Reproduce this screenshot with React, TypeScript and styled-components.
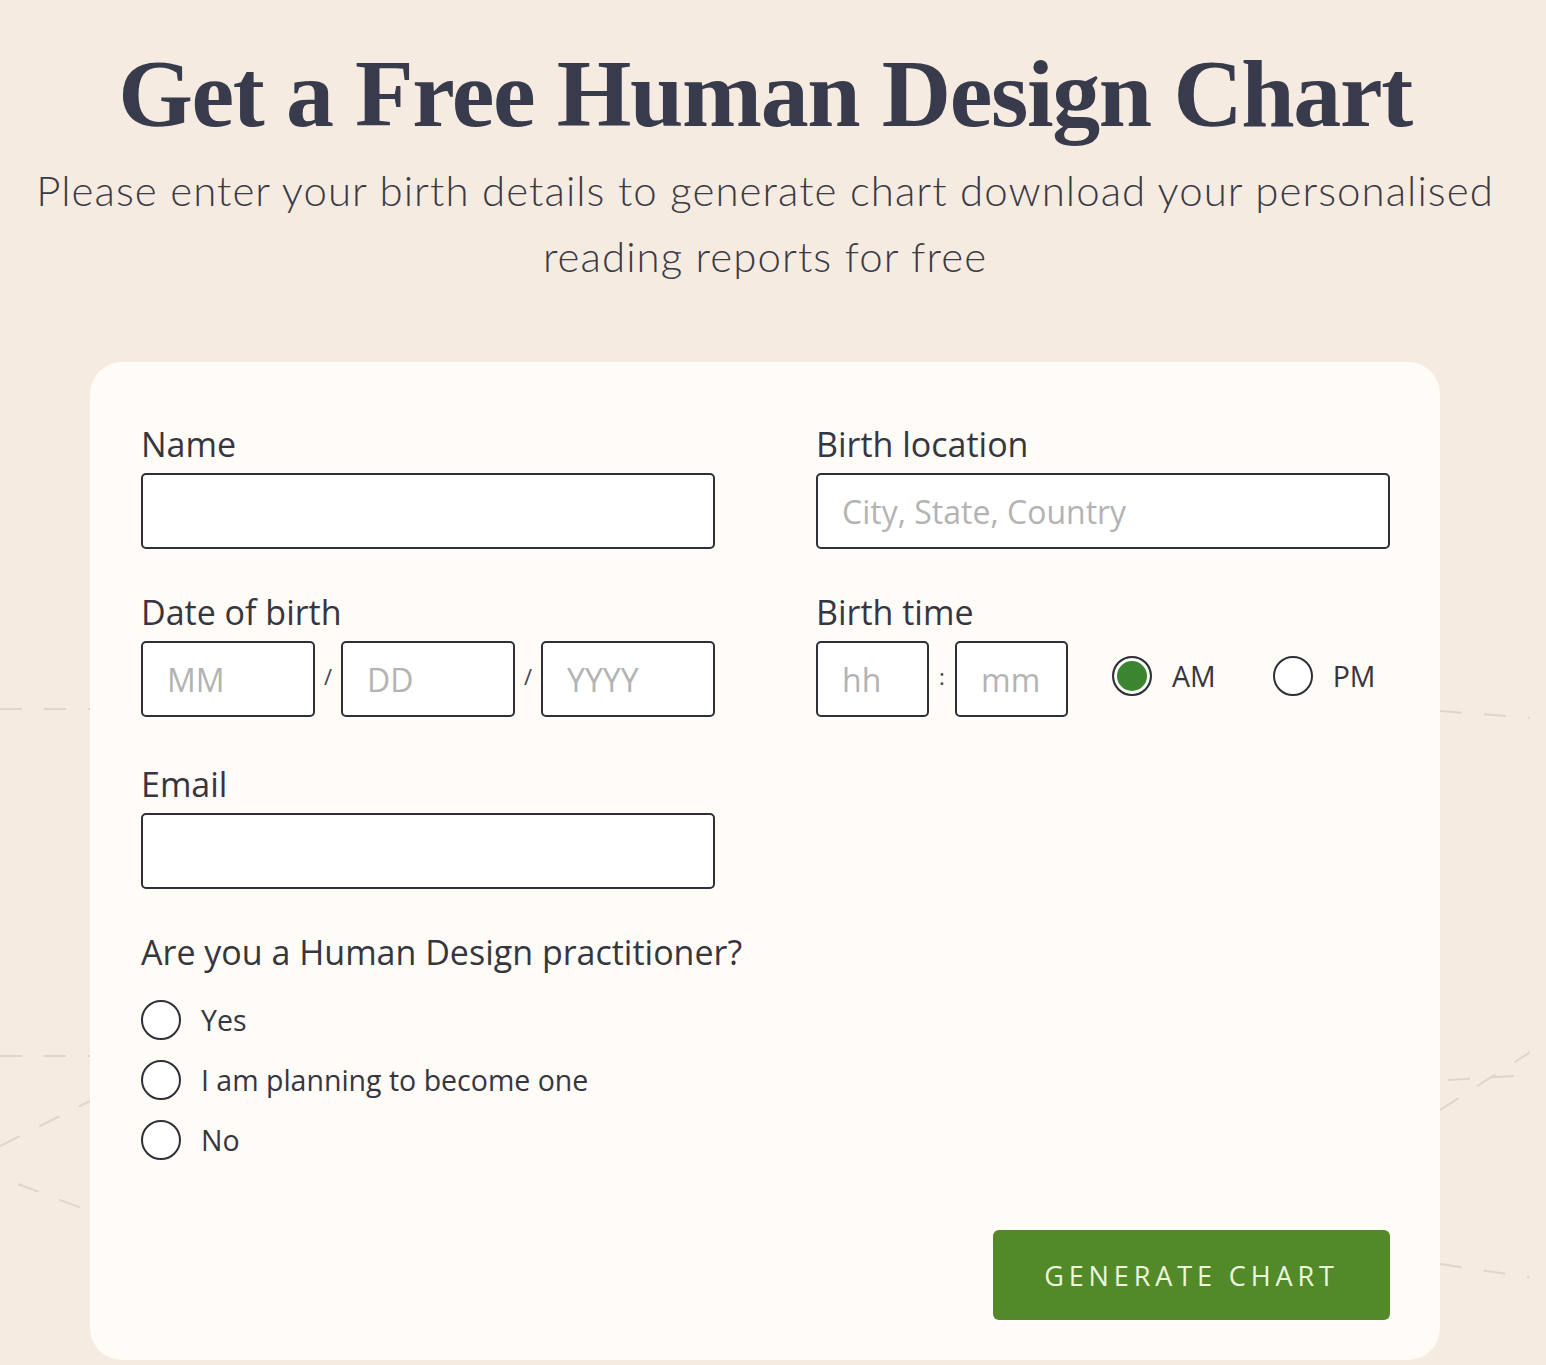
import React from 'react'
import styled, { createGlobalStyle } from 'styled-components'

const GlobalStyle = createGlobalStyle`
    html, body {
        margin: 0;
        padding: 0;
        background: #f6ebe1;
    }
    body {
        font-family: 'Open Sans', 'Liberation Sans', sans-serif;
        color: #35363f;
    }
`

const Page = styled.div`
    position: relative;
    width: 1530px;
    min-height: 1365px;
    overflow: hidden;
    padding-top: 42px;
    box-sizing: border-box;
`

const Backdrop = styled.svg`
    position: absolute;
    left: 0;
    top: 0;
    width: 1546px;
    height: 1365px;
    pointer-events: none;
`

const Header = styled.header`
    position: relative;
    text-align: center;
`

const Title = styled.h1`
    margin: 0;
    font-family: 'Liberation Serif', 'DejaVu Serif', serif;
    font-weight: 700;
    font-size: 96px;
    line-height: 104px;
    color: #383b4b;
    letter-spacing: -1.4px;
`

const Subtitle = styled.p`
    margin: 11px auto 0;
    font-family: Lato, 'Open Sans', sans-serif;
    font-weight: 300;
    font-size: 42px;
    line-height: 66px;
    color: #3a3a45;
    letter-spacing: 1.05px;
`

const Card = styled.form`
    position: relative;
    margin: 73px 0 0 90px;
    width: 1350px;
    box-sizing: border-box;
    padding: 62px 50px 40px 51px;
    background: #fffbf7;
    border-radius: 32px;
    display: grid;
    grid-template-columns: 574px 574px;
    column-gap: 101px;
`

const Column = styled.div`
    display: flex;
    flex-direction: column;
`

const Field = styled.div<{ $gap?: number }>`
    display: flex;
    flex-direction: column;
    margin-bottom: ${p => p.$gap ?? 43}px;
`

const Label = styled.label`
    font-size: 34px;
    line-height: 40px;
    color: #35363f;
    margin-bottom: 9px;
`

const Input = styled.input<{ $w?: number }>`
    box-sizing: border-box;
    width: ${p => (p.$w ? `${p.$w}px` : '100%')};
    height: 76px;
    border: 2px solid #2f3037;
    border-radius: 5px;
    background: #fff;
    padding: 0 24px;
    font-family: 'Open Sans', sans-serif;
    font-size: 32px;
    color: #35363f;
    outline: none;
    &::placeholder {
        color: #b3b3b3;
    }
`

const InputRow = styled.div`
    display: flex;
    align-items: center;
`

const Sep = styled.span`
    width: 26px;
    text-align: center;
    font-size: 22px;
    color: #45464d;
    margin-top: -6px;
`

const RadioRow = styled.label<{ $ml?: number; $lift?: number }>`
    display: flex;
    align-items: center;
    gap: 20px;
    margin-left: ${p => p.$ml ?? 0}px;
    margin-top: ${p => -(p.$lift ?? 0)}px;
    font-size: 28.5px;
    color: #35363f;
`

const Circle = styled.span<{ $on?: boolean }>`
    width: 40px;
    height: 40px;
    box-sizing: border-box;
    border-radius: 50%;
    border: 2px solid #2f3037;
    background: ${p => (p.$on ? '#3b8530' : '#fff')};
    box-shadow: ${p => (p.$on ? 'inset 0 0 0 3px #fff' : 'none')};
    flex-shrink: 0;
`

const Question = styled.div`
    font-size: 34px;
    line-height: 40px;
    color: #35363f;
    margin-bottom: 28px;
    white-space: nowrap;
`

const Options = styled.div`
    display: flex;
    flex-direction: column;
    gap: 20px;
`

const Footer = styled.div`
    grid-column: 1 / span 2;
    display: flex;
    justify-content: flex-end;
    margin-top: 70px;
`

const Button = styled.button`
    width: 397px;
    height: 90px;
    border: none;
    border-radius: 6px;
    background: #528a2a;
    color: #eef7dc;
    font-family: 'Open Sans', sans-serif;
    font-size: 27px;
    letter-spacing: 4.9px;
    padding: 0;
    cursor: pointer;
`

const dash = { stroke: '#e2d4c8', strokeWidth: 2, strokeDasharray: '22 22', fill: 'none' }

const App: React.FC = () => {
    return (
        <>
            <GlobalStyle />
            <Page>
                <Backdrop viewBox="0 0 1546 1365">
                    <line x1="0" y1="709" x2="92" y2="709" {...dash} />
                    <line x1="1440" y1="711" x2="1546" y2="719" {...dash} />
                    <line x1="0" y1="1056" x2="92" y2="1056" {...dash} />
                    <line x1="0" y1="1146" x2="92" y2="1100" {...dash} />
                    <line x1="18" y1="1184" x2="92" y2="1212" {...dash} />
                    <line x1="1440" y1="1110" x2="1546" y2="1042" {...dash} />
                    <line x1="1448" y1="1080" x2="1546" y2="1074" {...dash} />
                    <line x1="1440" y1="1264" x2="1546" y2="1280" {...dash} />
                </Backdrop>
                <Header>
                    <Title>Get a Free Human Design Chart</Title>
                    <Subtitle>
                        Please enter your birth details to generate chart download your personalised
                        <br />
                        reading reports for free
                    </Subtitle>
                </Header>
                <Card onSubmit={e => e.preventDefault()}>
                    <Column>
                        <Field>
                            <Label>Name</Label>
                            <Input />
                        </Field>
                        <Field $gap={47}>
                            <Label>Date of birth</Label>
                            <InputRow>
                                <Input $w={174} placeholder="MM" />
                                <Sep>/</Sep>
                                <Input $w={174} placeholder="DD" />
                                <Sep>/</Sep>
                                <Input $w={174} placeholder="YYYY" />
                            </InputRow>
                        </Field>
                        <Field>
                            <Label>Email</Label>
                            <Input />
                        </Field>
                        <Question>Are you a Human Design practitioner?</Question>
                        <Options>
                            <RadioRow>
                                <Circle />
                                Yes
                            </RadioRow>
                            <RadioRow>
                                <Circle />
                                I am planning to become one
                            </RadioRow>
                            <RadioRow>
                                <Circle />
                                No
                            </RadioRow>
                        </Options>
                    </Column>
                    <Column>
                        <Field>
                            <Label>Birth location</Label>
                            <Input placeholder="City, State, Country" />
                        </Field>
                        <Field>
                            <Label>Birth time</Label>
                            <InputRow>
                                <Input $w={113} placeholder="hh" />
                                <Sep>:</Sep>
                                <Input $w={113} placeholder="mm" />
                                <RadioRow $ml={44} $lift={7}>
                                    <Circle $on />
                                    AM
                                </RadioRow>
                                <RadioRow $ml={57} $lift={7}>
                                    <Circle />
                                    PM
                                </RadioRow>
                            </InputRow>
                        </Field>
                    </Column>
                    <Footer>
                        <Button type="submit">GENERATE CHART</Button>
                    </Footer>
                </Card>
            </Page>
        </>
    )
}

export default App
